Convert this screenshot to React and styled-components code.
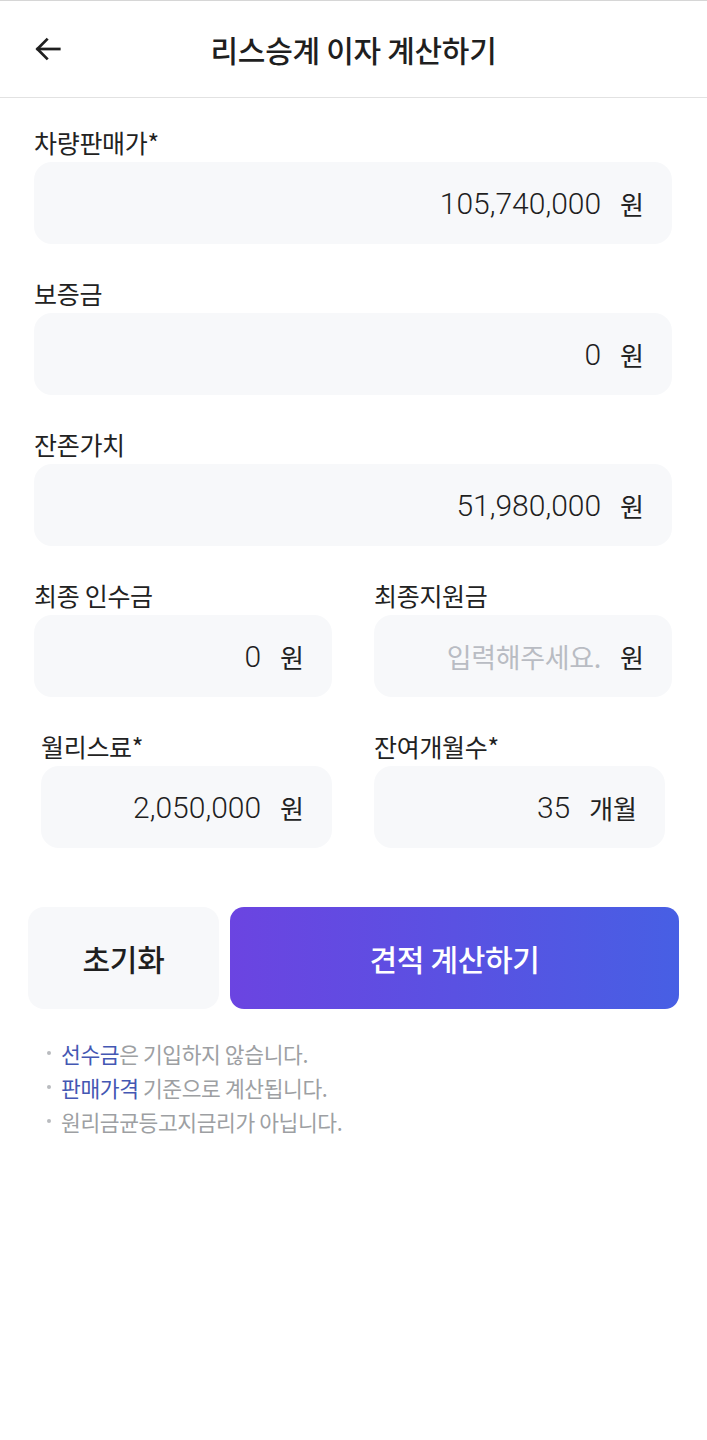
import React from "react"
import styled, { createGlobalStyle } from "styled-components"

const GlobalStyle = createGlobalStyle`
  * { box-sizing: border-box; }
  body {
    margin: 0;
    background: #ffffff;
    font-family: "Roboto", "Noto Sans CJK KR", sans-serif;
    color: #222222;
  }
`

const Page = styled.div`
  width: 707px;
  min-height: 1440px;
  background: #ffffff;
  border-top: 1px solid #d6d6d6;
`

const Header = styled.header`
  position: relative;
  height: 97px;
  display: flex;
  align-items: center;
  justify-content: center;
  border-bottom: 1px solid #e2e2e2;
`

const BackButton = styled.button`
  position: absolute;
  left: 30px;
  top: 30px;
  width: 36px;
  height: 36px;
  padding: 0;
  border: 0;
  background: none;
  display: flex;
  align-items: center;
  justify-content: center;
`

const Title = styled.h1`
  margin: 0;
  font-family: "Noto Sans CJK KR", sans-serif;
  font-size: 30px;
  font-weight: 500;
  letter-spacing: -0.3px;
  color: #1f1f1f;
`

const Form = styled.div`
  padding: 29px 35px 0 34px;
  display: flex;
  flex-direction: column;
  gap: 34px;
`

const Row = styled.div`
  display: grid;
  grid-template-columns: 1fr 1fr;
  column-gap: 42px;
`

const Field = styled.div`
  display: flex;
  flex-direction: column;
  gap: 5px;
  padding-left: ${(p) => (p.$inset === "left" ? "7px" : "0")};
  padding-right: ${(p) => (p.$inset === "right" ? "7px" : "0")};
`

const Label = styled.label`
  font-family: "Noto Sans CJK KR", sans-serif;
  font-size: 25px;
  line-height: 30px;
  font-weight: 400;
  color: #222222;
  letter-spacing: -0.3px;
`

const Box = styled.div`
  height: 82px;
  background: #f7f8fa;
  border-radius: 18px;
  display: flex;
  align-items: center;
  justify-content: flex-end;
  gap: 19px;
  padding-right: 28px;
`

const Value = styled.span`
  font-family: ${(p) =>
    p.$placeholder ? '"Noto Sans CJK KR", sans-serif' : '"Roboto", "Noto Sans CJK KR", sans-serif'};
  font-size: ${(p) => (p.$placeholder ? "27px" : "30px")};
  font-weight: ${(p) => (p.$placeholder ? 400 : 300)};
  color: ${(p) => (p.$placeholder ? "#b9bcc3" : "#1f1f1f")};
  letter-spacing: ${(p) => (p.$placeholder ? "-0.3px" : "0")};
`

const Unit = styled.span`
  font-family: "Noto Sans CJK KR", sans-serif;
  font-size: 26px;
  color: #222222;
`

const Actions = styled.div`
  margin-top: 59px;
  padding: 0 28px;
  display: grid;
  grid-template-columns: 191px 1fr;
  gap: 11px;
`

const Button = styled.button`
  height: 102px;
  border: 0;
  border-radius: ${(p) => (p.$primary ? "14px" : "16px")};
  background: ${(p) =>
    p.$primary ? "linear-gradient(90deg, #6b44e1 0%, #5a51e2 50%, #475fe4 100%)" : "#f7f8fa"};
  color: ${(p) => (p.$primary ? "#ffffff" : "#1f1f1f")};
  font-family: "Noto Sans CJK KR", sans-serif;
  font-size: 30px;
  font-weight: 500;
  letter-spacing: -0.3px;
`

const Notes = styled.ul`
  list-style: none;
  margin: 0;
  padding: 27px 0 0 47px;
  display: flex;
  flex-direction: column;
`

const Note = styled.li`
  display: flex;
  align-items: center;
  gap: 10px;
  height: 34px;
  font-family: "Noto Sans CJK KR", sans-serif;
  font-size: 21.5px;
  color: #9d9fa3;
  letter-spacing: -0.4px;

  &::before {
    content: "";
    width: 4px;
    height: 4px;
    border-radius: 50%;
    background: #b9bbbf;
  }
`

const Accent = styled.span`
  color: #4457b3;
`

const fields = [
  { label: "차량판매가*", value: "105,740,000", unit: "원" },
  { label: "보증금", value: "0", unit: "원" },
  { label: "잔존가치", value: "51,980,000", unit: "원" },
]

const InputField = ({ label, value, unit, placeholder, inset }) => (
  <Field $inset={inset}>
    <Label>{label}</Label>
    <Box>
      {value ? <Value>{value}</Value> : <Value $placeholder>{placeholder}</Value>}
      <Unit>{unit}</Unit>
    </Box>
  </Field>
)

const App = () => {
  return (
    <Page>
      <GlobalStyle />
      <Header>
        <BackButton aria-label="뒤로">
          <svg width="30" height="30" viewBox="0 0 24 24" fill="none" stroke="#1f1f1f" strokeWidth="2.2" strokeLinecap="square">
            <path d="M21 12H4" />
            <path d="M11 4.5L3.5 12L11 19.5" />
          </svg>
        </BackButton>
        <Title>리스승계 이자 계산하기</Title>
      </Header>
      <Form>
        {fields.map((f) => (
          <InputField key={f.label} {...f} />
        ))}
        <Row>
          <InputField label="최종 인수금" value="0" unit="원" />
          <InputField label="최종지원금" placeholder="입력해주세요." unit="원" />
        </Row>
        <Row>
          <InputField label="월리스료*" value="2,050,000" unit="원" inset="left" />
          <InputField label="잔여개월수*" value="35" unit="개월" inset="right" />
        </Row>
      </Form>
      <Actions>
        <Button>초기화</Button>
        <Button $primary>견적 계산하기</Button>
      </Actions>
      <Notes>
        <Note>
          <span>
            <Accent>선수금</Accent>은 기입하지 않습니다.
          </span>
        </Note>
        <Note>
          <span>
            <Accent>판매가격</Accent> 기준으로 계산됩니다.
          </span>
        </Note>
        <Note>
          <span>원리금균등고지금리가 아닙니다.</span>
        </Note>
      </Notes>
    </Page>
  )
}

export default App
